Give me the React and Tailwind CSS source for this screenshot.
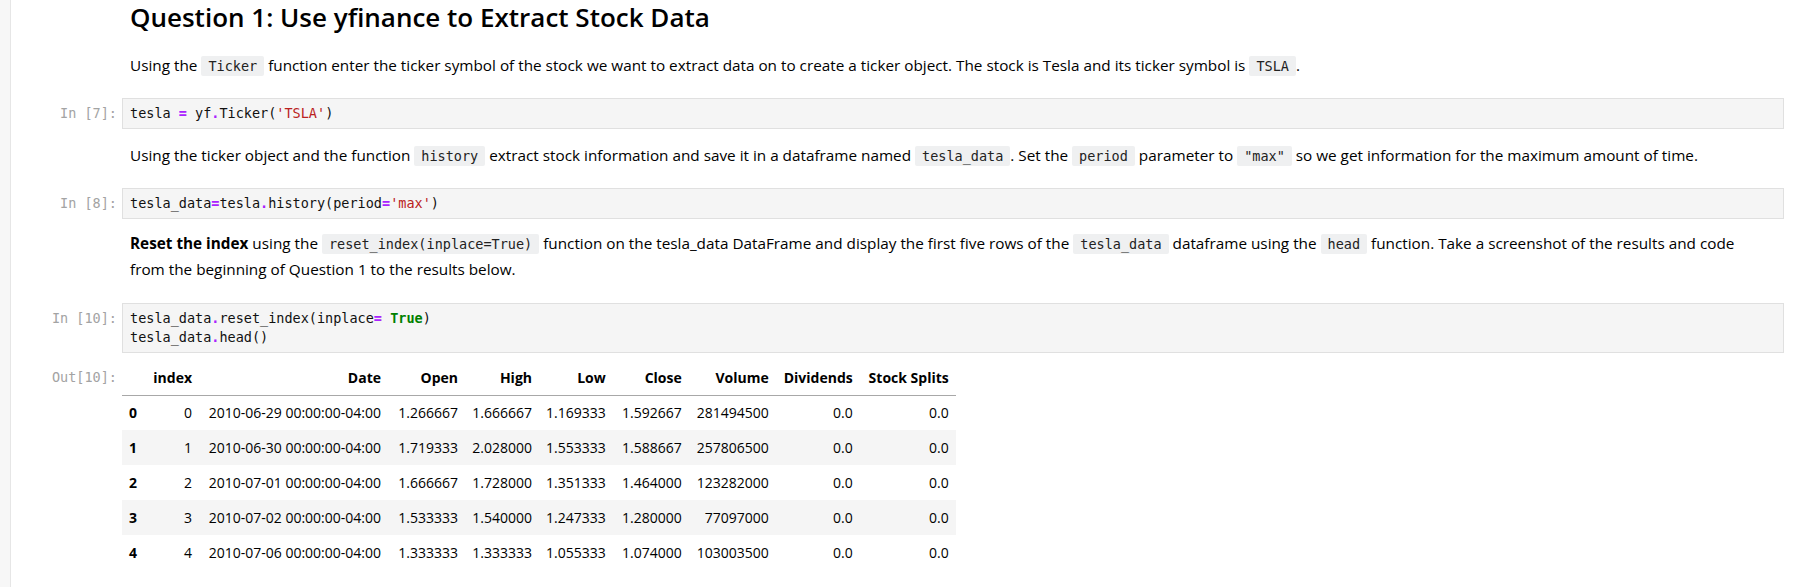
import React from 'react';

const sans = { fontFamily: '"Open Sans", "Noto Sans", sans-serif' };

const C = ({ children }) => (
  <code className="bg-[#eff0f1] px-[7px] py-[2px] rounded-[2px] font-['DejaVu_Sans_Mono',monospace] text-[13.5px] text-[#222]">
    {children}
  </code>
);

const Op = ({ children }) => <span className="text-[#aa22ff] font-bold">{children}</span>;
const Str = ({ children }) => <span className="text-[#ba2121]">{children}</span>;
const Kw = ({ children }) => <span className="text-[#008000] font-bold">{children}</span>;

const Prompt = ({ label }) => (
  <div className="w-[111px] shrink-0 pr-[5px] text-right text-[#a3a3a3] font-['DejaVu_Sans_Mono',monospace] text-[13.5px] leading-[19px] pt-[6px] whitespace-pre">
    {label}
  </div>
);

const CodeCell = ({ label, children, className = '' }) => (
  <div className={`flex ${className}`}>
    <Prompt label={label} />
    <div className="flex-1 bg-[#f5f5f5] border border-[#e0e0e0] px-[7px] py-[5px] font-['DejaVu_Sans_Mono',monospace] text-[13.5px] leading-[19px] text-[#111] whitespace-pre">
      {children}
    </div>
  </div>
);

const Markdown = ({ children, className = '' }) => (
  <div className={`flex ${className}`}>
    <div className="w-[111px] shrink-0" />
    <div className="flex-1 pl-[8px]">{children}</div>
  </div>
);

const columns = [
  { key: 'label', title: '', w: 'w-[22px]' },
  { key: 'index', title: 'index', w: 'w-[55px]' },
  { key: 'date', title: 'Date', w: 'w-[189px]' },
  { key: 'open', title: 'Open', w: 'w-[77px]' },
  { key: 'high', title: 'High', w: 'w-[74px]' },
  { key: 'low', title: 'Low', w: 'w-[72px]' },
  { key: 'close', title: 'Close', w: 'w-[76px]' },
  { key: 'volume', title: 'Volume', w: 'w-[87px]' },
  { key: 'div', title: 'Dividends', w: 'w-[84px]' },
  { key: 'split', title: 'Stock Splits', w: 'w-[96px]' },
];

const rows = [
  ['0', '0', '2010-06-29 00:00:00-04:00', '1.266667', '1.666667', '1.169333', '1.592667', '281494500', '0.0', '0.0'],
  ['1', '1', '2010-06-30 00:00:00-04:00', '1.719333', '2.028000', '1.553333', '1.588667', '257806500', '0.0', '0.0'],
  ['2', '2', '2010-07-01 00:00:00-04:00', '1.666667', '1.728000', '1.351333', '1.464000', '123282000', '0.0', '0.0'],
  ['3', '3', '2010-07-02 00:00:00-04:00', '1.533333', '1.540000', '1.247333', '1.280000', '77097000', '0.0', '0.0'],
  ['4', '4', '2010-07-06 00:00:00-04:00', '1.333333', '1.333333', '1.055333', '1.074000', '103003500', '0.0', '0.0'],
];

const DataTable = () => (
  <table className="table-fixed border-collapse text-[14px] text-black" style={sans}>
    <colgroup>
      {columns.map((c) => (
        <col key={c.key} className={c.w} />
      ))}
    </colgroup>
    <thead>
      <tr className="h-[35px] border-b border-[#a8a8a8]">
        {columns.map((c) => (
          <th key={c.key} className="px-[7px] text-right font-bold whitespace-nowrap">
            {c.title}
          </th>
        ))}
      </tr>
    </thead>
    <tbody>
      {rows.map((r, i) => (
        <tr key={i} className={`h-[35px] ${i % 2 === 1 ? 'bg-[#f5f5f5]' : ''}`}>
          {r.map((v, j) =>
            j === 0 ? (
              <th key={j} className="px-[7px] text-left font-bold">
                {v}
              </th>
            ) : (
              <td key={j} className="px-[7px] text-right whitespace-nowrap">
                {v}
              </td>
            )
          )}
        </tr>
      ))}
    </tbody>
  </table>
);

export default function App() {
  return (
    <div className="w-[1798px] h-[587px] overflow-hidden bg-[#f7f7f7]">
      <div className="ml-[10px] h-full border-l border-[#e6e6e6] bg-white pr-[14px] pt-[1px]">
        <Markdown>
          <h1 className="text-[26px] leading-[33px] font-semibold text-black" style={sans}>
            Question 1: Use yfinance to Extract Stock Data
          </h1>
        </Markdown>

        <Markdown className="mt-[21px]">
          <p className="text-[15.3px] leading-[20px] text-black whitespace-nowrap" style={sans}>
            Using the <C>Ticker</C> function enter the ticker symbol of the stock we want to extract data on to create a
            ticker object. The stock is Tesla and its ticker symbol is <C>TSLA</C>.
          </p>
        </Markdown>

        <CodeCell label="In [7]:" className="mt-[22px]">
          tesla <Op>=</Op> yf<Op>.</Op>Ticker(<Str>'TSLA'</Str>)
        </CodeCell>

        <Markdown className="mt-[16px]">
          <p className="text-[15.3px] leading-[20px] text-black whitespace-nowrap" style={sans}>
            Using the ticker object and the function <C>history</C> extract stock information and save it in a dataframe
            named <C>tesla_data</C>. Set the <C>period</C> parameter to <C>"max"</C> so we get information for the
            maximum amount of time.
          </p>
        </Markdown>

        <CodeCell label="In [8]:" className="mt-[22px]">
          tesla_data<Op>=</Op>tesla<Op>.</Op>history(period<Op>=</Op>
          <Str>'max'</Str>)
        </CodeCell>

        <Markdown className="mt-[12px]">
          <p className="text-[15.3px] leading-[25px] text-black whitespace-nowrap" style={sans}>
            <b>Reset the index</b> using the <C>reset_index(inplace=True)</C> function on the tesla_data DataFrame and
            display the first five rows of the <C>tesla_data</C> dataframe using the <C>head</C> function. Take a
            screenshot of the results and code
            <br />
            from the beginning of Question 1 to the results below.
          </p>
        </Markdown>

        <CodeCell label="In [10]:" className="mt-[21px]">
          tesla_data<Op>.</Op>reset_index(inplace<Op>=</Op> <Kw>True</Kw>)
          {'\n'}tesla_data<Op>.</Op>head()
        </CodeCell>

        <div className="flex mt-[7px]">
          <div className="w-[111px] shrink-0 pr-[5px] text-right text-[#a3a3a3] font-['DejaVu_Sans_Mono',monospace] text-[13.5px] leading-[35px] whitespace-pre">
            Out[10]:
          </div>
          <DataTable />
        </div>
      </div>
    </div>
  );
}
